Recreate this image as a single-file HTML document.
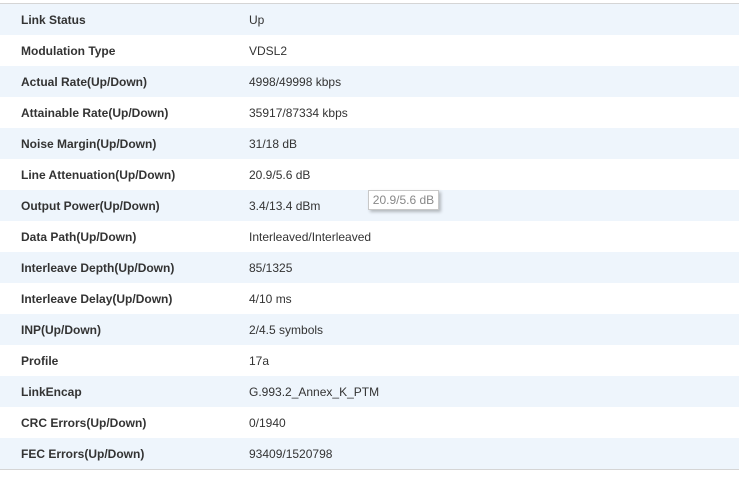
<!DOCTYPE html>
<html><head><style>
body{margin:0;background:#fff;font-family:"Liberation Sans",Arial,sans-serif;font-size:12px;color:#333;}
.t{position:absolute;left:0;top:3px;width:739px;border-top:1px solid #d5d5d5;border-bottom:1px solid #d5d5d5;}
.r{height:31px;position:relative;}
.r:nth-child(odd){background:#eef5fc;}
.l{position:absolute;left:21px;top:9px;font-weight:bold;color:#333;}
.v{position:absolute;left:249px;top:9px;color:#333;}
.tip{position:absolute;left:368px;top:190px;width:69px;height:18px;border:1px solid #c8c8c8;background:#fff;color:#888;font-size:12px;line-height:18px;text-align:center;box-shadow:2px 2px 3px rgba(0,0,0,0.25);}
</style></head><body>
<div class="t">
<div class="r"><span class="l">Link Status</span><span class="v">Up</span></div>
<div class="r"><span class="l">Modulation Type</span><span class="v">VDSL2</span></div>
<div class="r"><span class="l">Actual Rate(Up/Down)</span><span class="v">4998/49998 kbps</span></div>
<div class="r"><span class="l">Attainable Rate(Up/Down)</span><span class="v">35917/87334 kbps</span></div>
<div class="r"><span class="l">Noise Margin(Up/Down)</span><span class="v">31/18 dB</span></div>
<div class="r"><span class="l">Line Attenuation(Up/Down)</span><span class="v">20.9/5.6 dB</span></div>
<div class="r"><span class="l">Output Power(Up/Down)</span><span class="v">3.4/13.4 dBm</span></div>
<div class="r"><span class="l">Data Path(Up/Down)</span><span class="v">Interleaved/Interleaved</span></div>
<div class="r"><span class="l">Interleave Depth(Up/Down)</span><span class="v">85/1325</span></div>
<div class="r"><span class="l">Interleave Delay(Up/Down)</span><span class="v">4/10 ms</span></div>
<div class="r"><span class="l">INP(Up/Down)</span><span class="v">2/4.5 symbols</span></div>
<div class="r"><span class="l">Profile</span><span class="v">17a</span></div>
<div class="r"><span class="l">LinkEncap</span><span class="v">G.993.2_Annex_K_PTM</span></div>
<div class="r"><span class="l">CRC Errors(Up/Down)</span><span class="v">0/1940</span></div>
<div class="r"><span class="l">FEC Errors(Up/Down)</span><span class="v">93409/1520798</span></div>
</div>
<div class="tip">20.9/5.6 dB</div>
</body></html>
